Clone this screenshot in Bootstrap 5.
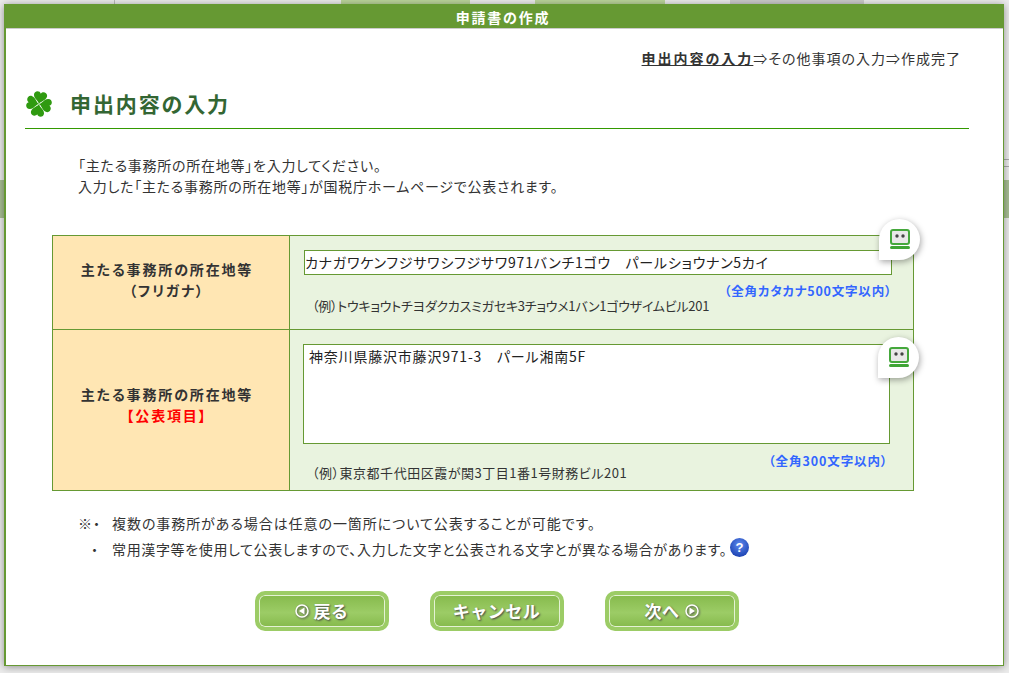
<!DOCTYPE html>
<html lang="ja">
<head>
<meta charset="UTF-8">
<title>申請書の作成</title>
<link href="https://cdn.jsdelivr.net/npm/bootstrap@5.3.0/dist/css/bootstrap.min.css" rel="stylesheet">
<style>
html, body { height: 673px; overflow: hidden; }
body {
  font-family: "Noto Sans CJK JP", "Liberation Sans", sans-serif; font-size: 14px; color: #333; padding: 4px 5px 7px 4px;
  font-feature-settings: "palt"; letter-spacing: 1px;
  background:
    linear-gradient(#bbb, #bbb) 114px 0 / 1px 4px no-repeat,
    linear-gradient(#bcd69c, #bcd69c) 341px 0 / 129px 4px no-repeat,
    linear-gradient(#bcd69c, #bcd69c) 535px 0 / 130px 4px no-repeat,
    linear-gradient(#cccccc, #cccccc) 730px 0 / 134px 4px no-repeat,
    linear-gradient(#aaa, #aaa) 1004px 159px / 5px 1px no-repeat,
    linear-gradient(#aaa, #aaa) 1004px 166px / 5px 1px no-repeat,
    linear-gradient(#a9bf94, #a9bf94) 0 180px / 100% 38px no-repeat,
    #ececec;
}
.dlg { width: 1000px; height: 662px; background: #fff; border: 1px solid #669933; border-top: 0; border-left-width: 2px; box-shadow: 0 1px 8px rgba(0,0,0,.4); }
.dlg-head { background: #669933; color: #fff; font-weight: 700; font-size: 14px; letter-spacing: 1.8px; height: 24px; line-height: 27px; text-align: center; border-bottom: 1px solid #ccc; box-sizing: content-box; padding-right: 3px; }
.steps { margin: 19px 42px 0 0; line-height: 20px; }
.steps b { text-decoration: underline; letter-spacing: 2px; }
.page-title { margin: 12px 34px 0 19px; height: 49px; border-bottom: 1px solid #339900; }
.page-title h1 { font-size: 21px; font-weight: 700; color: #336633; margin: 0 0 0 17px; letter-spacing: 1.9px; }
.intro { margin: 26px 0 0 72px; line-height: 21px; letter-spacing: .74px; }
.form-tbl { margin: 38px 0 0 46px; width: 862px; border: 1px solid #669933; }
.form-tbl > .row-a { height: 93px; }
.form-tbl > .row-b { height: 161px; border-top: 1px solid #669933; }
.lbl { width: 237px; background: #ffe6b3; border-right: 1px solid #669933; font-weight: 700; line-height: 21px; letter-spacing: 1.85px; padding-right: 8px; }
.row-a .lbl { padding-bottom: 5px; }
.row-b .lbl { padding-bottom: 10px; }
.red-lbl { color: #ff0000; }
.fld { background: #e9f3df; padding: 14px 0 0 14px; }
.fake-in { border: 1px solid #669933; background: #fff; color: #222; }
.row-a .fake-in { width: 588px; height: 25px; line-height: 23px; padding-left: 0; letter-spacing: .75px; }
.row-b .fake-in { width: 587px; height: 100px; line-height: 22px; padding-left: 5px; margin-left: -1px; letter-spacing: .8px; }
.limit { color: #3366ff; font-weight: 700; font-size: 12.5px; line-height: 18px; }
.row-a .limit { margin: 7px 21px 0 0; letter-spacing: .8px; }
.row-b .limit { margin: 8px 25px 0 0; letter-spacing: .9px; }
.eg { font-size: 13px; line-height: 20px; margin-left: 8px; }
.row-a .eg { margin-top: -4px; letter-spacing: -.25px; }
.row-b .eg { margin-top: -7px; letter-spacing: .52px; }
.pm-badge { position: absolute; width: 41px; height: 41px; background: #fff; border-radius: 50% 50% 50% 0; box-shadow: 1px 2px 6px rgba(0,0,0,.35); display: flex; align-items: center; justify-content: center; }
.pm-one { left: 826px; top: -17px; }
.pm-two { left: 825px; top: 101px; }
.notes { margin: 19px 0 0 72px; line-height: 26px; }
.notes .mk { display: inline-block; width: 34px; }
.notes .mk2 { display: inline-block; width: 34px; padding-left: 13px; }
.note-two { letter-spacing: .64px; }
.note-one { letter-spacing: .94px; }
.q-ico { width: 19px; height: 19px; margin-left: 3px; border-radius: 50%; background: radial-gradient(circle at 50% 35%, #5f8cf0, #1f45b5 75%); color: #fff; font: 700 13px/19px "Liberation Sans", sans-serif; text-align: center; vertical-align: 3px; display: inline-block; }
.btn-row { margin: 29px 16px 0 0; gap: 41px; }
.gbtn { width: 134px; height: 40px; border: 4px solid #9ccc66; border-radius: 10px; background: linear-gradient(#86ba4c, #9ccc66 55%, #86ba4c); box-shadow: inset 0 0 0 1px #e4f2d4; color: #fff; font-weight: 700; font-size: 17px; letter-spacing: .5px; text-shadow: 1px 1px 2px #444; padding: 0; gap: 5px; }
.gbtn:hover { background: #8cc052; color: #fff; border-color: #9ccc66; }
.gbtn svg { filter: drop-shadow(1px 1px 1px #555); }
</style>
</head>
<body>
<div class="dlg">
  <div class="dlg-head">申請書の作成</div>
  <div class="steps text-end"><b>申出内容の入力</b>⇒その他事項の入力⇒作成完了</div>
  <div class="page-title d-flex align-items-center">
    <svg width="28" height="28" viewBox="0 0 28 28">
      <defs><path id="leaf" d="M0 0C-1-3-5.500-4-6.500-8-7.500-12.500-1.500-14 0-10.500 1.500-14 7.500-12.500 6.500-8 5.500-4 1-3 0 0z" fill="#2f9a10"/></defs>
      <use href="#leaf" transform="translate(14 14) rotate(10)"/>
      <use href="#leaf" transform="translate(14 14) rotate(100)"/>
      <use href="#leaf" transform="translate(14 14) rotate(190)"/>
      <use href="#leaf" transform="translate(14 14) rotate(280)"/>
    </svg>
    <h1>申出内容の入力</h1>
  </div>
  <div class="intro">「主たる事務所の所在地等」を入力してください。<br>入力した「主たる事務所の所在地等」が国税庁ホームページで公表されます。</div>
  <div class="form-tbl position-relative">
    <div class="row-a d-flex">
      <div class="lbl d-flex flex-column align-items-center justify-content-center"><div>主たる事務所の所在地等</div><div>（フリガナ）</div></div>
      <div class="fld flex-grow-1">
        <div class="fake-in">カナガワケンフジサワシフジサワ971バンチ1ゴウ　パールショウナン5カイ</div>
        <div class="limit text-end">（全角カタカナ500文字以内）</div>
        <div class="eg">（例）トウキョウトチヨダクカスミガセキ3チョウメ1バン1ゴウザイムビル201</div>
      </div>
    </div>
    <div class="row-b d-flex">
      <div class="lbl d-flex flex-column align-items-center justify-content-center"><div>主たる事務所の所在地等</div><div class="red-lbl">【公表項目】</div></div>
      <div class="fld flex-grow-1">
        <div class="fake-in">神奈川県藤沢市藤沢971-3　パール湘南5F</div>
        <div class="limit text-end">（全角300文字以内）</div>
        <div class="eg">（例）東京都千代田区霞が関3丁目1番1号財務ビル201</div>
      </div>
    </div>
    <div class="pm-badge pm-one"><svg width="20" height="21" viewBox="0 0 20 21"><rect x="1" y="1" width="18" height="14" rx="2" fill="#e8e8e8" stroke="#45a83c" stroke-width="2"/><circle cx="7" cy="7" r="1.7" fill="#444"/><circle cx="13" cy="7" r="1.7" fill="#444"/><rect y="17" width="20" height="3" rx="1.500" fill="#3fa535"/></svg></div>
    <div class="pm-badge pm-two"><svg width="20" height="21" viewBox="0 0 20 21"><rect x="1" y="1" width="18" height="14" rx="2" fill="#e8e8e8" stroke="#45a83c" stroke-width="2"/><circle cx="7" cy="7" r="1.7" fill="#444"/><circle cx="13" cy="7" r="1.7" fill="#444"/><rect y="17" width="20" height="3" rx="1.500" fill="#3fa535"/></svg></div>
  </div>
  <div class="notes">
    <div class="note-one"><span class="mk">※・</span>複数の事務所がある場合は任意の一箇所について公表することが可能です。</div>
    <div class="note-two"><span class="mk2">・</span>常用漢字等を使用して公表しますので、入力した文字と公表される文字とが異なる場合があります。<span class="q-ico">?</span></div>
  </div>
  <div class="btn-row d-flex justify-content-center">
    <button type="button" class="btn gbtn d-flex align-items-center justify-content-center"><svg width="14" height="14" viewBox="0 0 14 14"><circle cx="7" cy="7" r="6" fill="none" stroke="#fff" stroke-width="1.500"/><path d="M9.500 3.500v7L4 7z" fill="#fff"/></svg>戻る</button>
    <button type="button" class="btn gbtn d-flex align-items-center justify-content-center">キャンセル</button>
    <button type="button" class="btn gbtn d-flex align-items-center justify-content-center">次へ<svg width="14" height="14" viewBox="0 0 14 14"><circle cx="7" cy="7" r="6" fill="none" stroke="#fff" stroke-width="1.500"/><path d="M4.500 3.500v7L10 7z" fill="#fff"/></svg></button>
  </div>
</div>
</body>
</html>
